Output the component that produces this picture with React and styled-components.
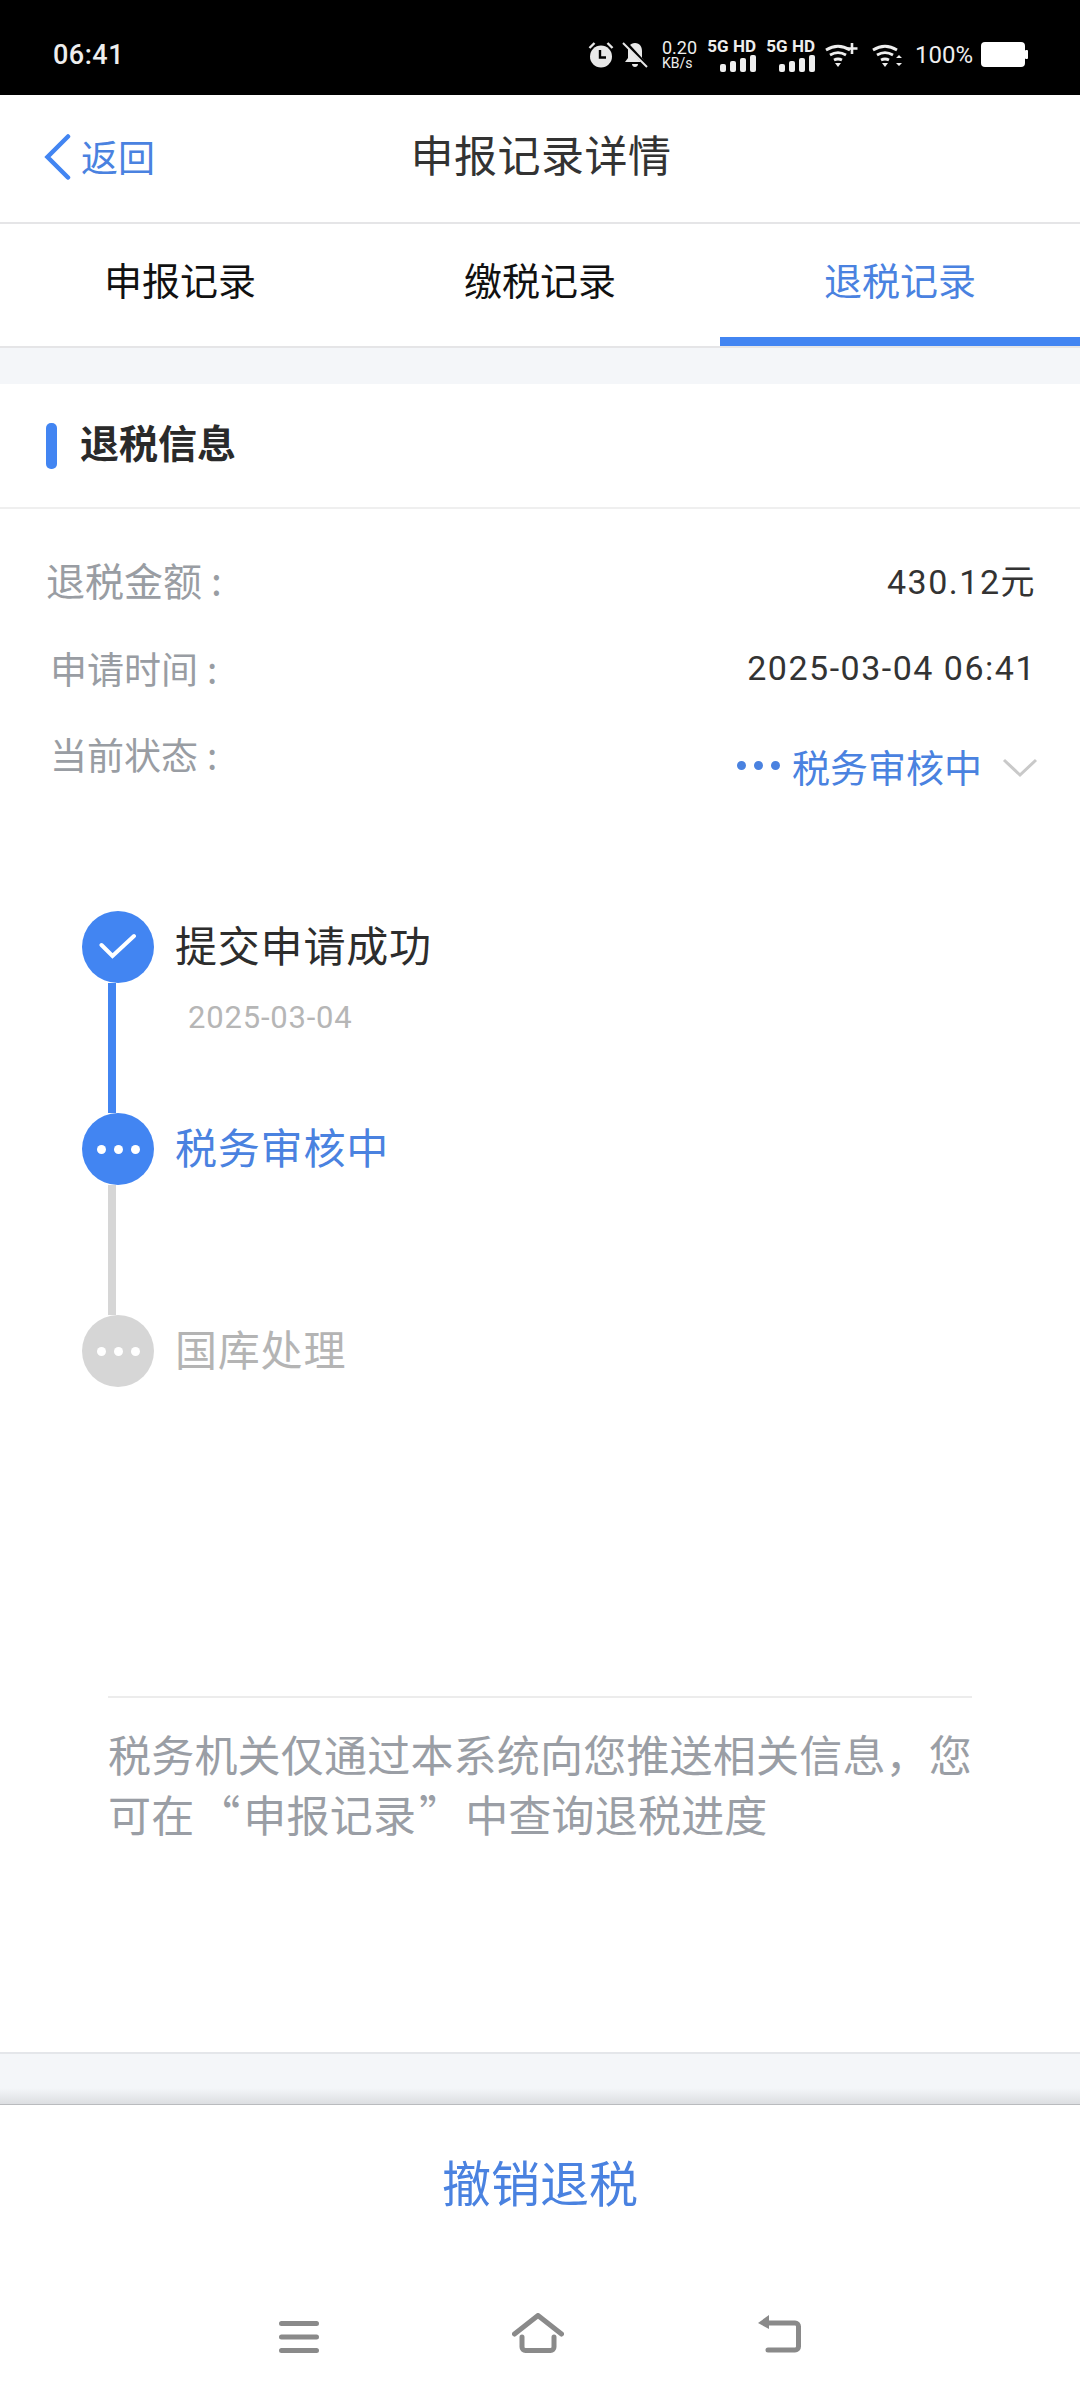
import React from "react";
import styled, { createGlobalStyle } from "styled-components";

const BLUE = "#4a82e0";
const FILL = "#4285f2";
const CJK = `"Noto Sans CJK SC", sans-serif`;
const LATIN = `Roboto, "Noto Sans CJK SC", sans-serif`;

const GlobalStyle = createGlobalStyle`
  html, body {
    margin: 0;
    padding: 0;
    background: #fff;
  }
  * {
    box-sizing: border-box;
  }
`;

const AlarmIcon = () => (
  <svg width="26" height="27" viewBox="0 0 26 27">
    <circle cx="13" cy="15.500" r="11" fill="#e8e8e8" />
    <path d="M12 9v7.500h6" fill="none" stroke="#000" strokeWidth="2.4" />
    <path d="M1.500 7l5-5M24.500 7l-5-5" stroke="#e8e8e8" strokeWidth="2.4" />
  </svg>
);

const BellOffIcon = () => (
  <svg width="26" height="26" viewBox="0 0 26 26">
    <path
      d="M13 1c5 0 7 4 7 8v7l3 4H3l3-4V9c0-4 2-8 7-8zM10 22h6c0 2-1.500 3-3 3s-3-1-3-3z"
      fill="#e8e8e8"
    />
    <path d="M3 0l22 24" stroke="#000" strokeWidth="3.500" />
    <path d="M1 1l24 24" stroke="#e8e8e8" strokeWidth="2" />
  </svg>
);

const SignalBars = () => (
  <svg width="36" height="17" viewBox="0 0 36 17">
    <rect x="0" y="9" width="6" height="8" rx="2" fill="#eee" />
    <rect x="10" y="6" width="6" height="11" rx="2" fill="#eee" />
    <rect x="20" y="3" width="6" height="14" rx="2" fill="#eee" />
    <rect x="30" y="0" width="6" height="17" rx="2" fill="#eee" />
  </svg>
);

const WifiIcon = ({ plus }) => (
  <svg width="33" height="25" viewBox="0 0 33 25">
    <path
      d="M1 8c8-5 16-5 24 0M5 13c5-3 11-3 16 0M9 18c3-1.500 5-1.500 8 0"
      fill="none"
      stroke="#eee"
      strokeWidth="2.800"
    />
    <path d="M10 21h6l-3 4z" fill="#eee" />
    {plus ? (
      <path d="M27 1v11M21.500 6.500h11" stroke="#eee" strokeWidth="2.600" />
    ) : (
      <path d="M27 13l3 3h-6zM27 24l3-3h-6z" fill="#eee" />
    )}
  </svg>
);

const BatteryIcon = () => (
  <svg width="47" height="25" viewBox="0 0 47 25">
    <rect x="0" y="0" width="44" height="25" rx="4" fill="#fff" />
    <rect x="44" y="8" width="3" height="9" rx="1" fill="#fff" />
  </svg>
);

const BackChevron = () => (
  <svg width="27" height="46" viewBox="0 0 27 46">
    <path
      d="M24 2.500L3.500 23 24 43.500"
      fill="none"
      stroke={FILL}
      strokeWidth="4.500"
      strokeLinecap="round"
    />
  </svg>
);

const DownChevron = () => (
  <svg width="36" height="20" viewBox="0 0 36 20">
    <path d="M2 2l16 15L34 2" fill="none" stroke="#c9c9c9" strokeWidth="3" />
  </svg>
);

const CheckMark = () => (
  <svg width="38" height="28" viewBox="0 0 38 28">
    <path
      d="M2.500 12l11 11L35 3"
      fill="none"
      stroke="#fff"
      strokeWidth="4"
      strokeLinecap="round"
    />
  </svg>
);

const MenuIcon = () => (
  <svg width="40" height="32" viewBox="0 0 40 32">
    <path
      d="M2.500 2.500h35M2.500 16h35M2.500 29.500h35"
      stroke="#8a8a8a"
      strokeWidth="5"
      strokeLinecap="round"
    />
  </svg>
);

const HomeIcon = () => (
  <svg width="52" height="40" viewBox="0 0 52 40">
    <path
      d="M2.500 21L26 2.500 49.500 21M10 24v10c0 2 1.500 3.500 3.500 3.500h25c2 0 3.500-1.500 3.500-3.500V24"
      fill="none"
      stroke="#8a8a8a"
      strokeWidth="5"
      strokeLinecap="round"
      strokeLinejoin="round"
    />
  </svg>
);

const ReturnIcon = () => (
  <svg width="44" height="38" viewBox="0 0 44 38">
    <path
      d="M8 8h30c2 0 3.500 1.500 3.500 3.500v20c0 2-1.500 3.500-3.500 3.500H11"
      fill="none"
      stroke="#8a8a8a"
      strokeWidth="5"
      strokeLinecap="round"
    />
    <path d="M12 0v14L1 8z" fill="#8a8a8a" />
  </svg>
);

const steps = [
  { state: "done", title: "提交申请成功", date: "2025-03-04" },
  { state: "active", title: "税务审核中" },
  { state: "todo", title: "国库处理" },
];

function App() {
  return (
    <Page>
      <GlobalStyle />
      <StatusBar>
        <Clock>06:41</Clock>
        <StatusIcons>
          <AlarmIcon />
          <BellOffIcon />
          <Speed>
            <span>0.20</span>
            <small>KB/s</small>
          </Speed>
          <Sim $gap={5}>
            <b>5G HD</b>
            <SignalBars />
          </Sim>
          <Sim $gap={3}>
            <b>5G HD</b>
            <SignalBars />
          </Sim>
          <WifiSlot $gap={2}>
            <WifiIcon plus />
          </WifiSlot>
          <WifiSlot $gap={6}>
            <WifiIcon />
          </WifiSlot>
          <Battery>100%</Battery>
          <BatteryIcon />
        </StatusIcons>
      </StatusBar>

      <NavBar>
        <BackBtn>
          <BackChevron />
          <span>返回</span>
        </BackBtn>
        <NavTitle>申报记录详情</NavTitle>
      </NavBar>

      <Tabs>
        <Tab>申报记录</Tab>
        <Tab>缴税记录</Tab>
        <Tab $active>退税记录</Tab>
      </Tabs>

      <Band />

      <Main>
        <SectionHead>
          <Mark />
          <SectionTitle>退税信息</SectionTitle>
        </SectionHead>

        <Info>
          <InfoRow>
            <Label>
              退税金额<Colon>:</Colon>
            </Label>
            <Value>430.12元</Value>
          </InfoRow>
          <InfoRow>
            <Label $indent>
              申请时间<Colon>:</Colon>
            </Label>
            <Value>2025-03-04 06:41</Value>
          </InfoRow>
          <StatusRow>
            <Label $indent>
              当前状态<Colon>:</Colon>
            </Label>
            <StatusValue>
              <Dots $size={9} $color={BLUE} />
              <span>税务审核中</span>
              <DownChevron />
            </StatusValue>
          </StatusRow>
        </Info>

        <Timeline>
          {steps.map((step, i) => (
            <Step key={step.title}>
              <Rail>
                <Node $state={step.state}>
                  {step.state === "done" ? (
                    <CheckMark />
                  ) : (
                    <Dots $size={9} $color="#fff" />
                  )}
                </Node>
                {i < steps.length - 1 && <Line $state={step.state} />}
              </Rail>
              <StepBody>
                <StepTitle $state={step.state}>{step.title}</StepTitle>
                {step.date && <StepDate>{step.date}</StepDate>}
              </StepBody>
            </Step>
          ))}
        </Timeline>

        <Note>
          <NoteText>
            {"税务机关仅通过本系统向您推送相关信息，您可在\u200a“\u200a申报记录\u200a”\u200a中查询退税进度"}
          </NoteText>
        </Note>
      </Main>

      <BottomBand />

      <Footer>
        <Cancel>撤销退税</Cancel>
        <SystemNav>
          <MenuIcon />
          <HomeIcon />
          <ReturnIcon />
        </SystemNav>
      </Footer>
    </Page>
  );
}

const Page = styled.div`
  display: flex;
  flex-direction: column;
  width: 1080px;
  height: 2400px;
  overflow: hidden;
  background: #fff;
  font-family: ${CJK};
`;

// 상단 상태바
const StatusBar = styled.div`
  display: flex;
  align-items: center;
  justify-content: space-between;
  flex: none;
  height: 95px;
  padding: 14px 52px 0 53px;
  background: #000;
  color: #eee;
  font-family: ${LATIN};
`;

const Clock = styled.div`
  font-size: 27px;
  font-weight: 500;
  letter-spacing: 0.5px;
`;

const StatusIcons = styled.div`
  display: flex;
  align-items: center;
  gap: 8px;
`;

const Speed = styled.div`
  display: flex;
  flex-direction: column;
  width: 33px;
  margin-left: 6px;
  font-size: 18px;
  line-height: 17px;
  small {
    font-size: 14px;
    line-height: 15px;
  }
`;

const Sim = styled.div`
  display: flex;
  flex-direction: column;
  align-items: flex-end;
  width: 48px;
  margin-left: ${(p) => p.$gap}px;
  b {
    font-size: 17px;
    line-height: 17px;
    white-space: nowrap;
  }
`;

const WifiSlot = styled.div`
  display: flex;
  margin-left: ${(p) => p.$gap}px;
`;

const Battery = styled.div`
  margin-left: 2px;
  font-size: 24px;
`;

const NavBar = styled.div`
  display: flex;
  align-items: center;
  justify-content: center;
  position: relative;
  flex: none;
  height: 129px;
  border-bottom: 2px solid #e5e5e7;
`;

const BackBtn = styled.div`
  position: absolute;
  left: 44px;
  top: 38px;
  display: flex;
  align-items: center;
  gap: 10px;
  color: ${BLUE};
  font-size: 37px;
  line-height: 46px;
  span {
    padding-bottom: 2px;
  }
`;

const NavTitle = styled.div`
  padding: 0 0 12px 2px;
  color: #333;
  font-size: 43px;
  letter-spacing: 0.5px;
`;

const Tabs = styled.div`
  display: grid;
  grid-template-columns: 360px 360px 360px;
  flex: none;
  height: 124px;
  border-bottom: 2px solid #e5e5e7;
`;

const Tab = styled.div`
  display: flex;
  align-items: center;
  justify-content: center;
  padding-bottom: 5px;
  color: ${(p) => (p.$active ? BLUE : "#111")};
  font-size: 38px;
  border-bottom: 9px solid ${(p) => (p.$active ? FILL : "transparent")};
`;

const Band = styled.div`
  flex: none;
  height: 36px;
  background: #f4f6f9;
`;

const Main = styled.div`
  flex: 1;
  min-height: 0;
`;

const SectionHead = styled.div`
  display: flex;
  align-items: center;
  gap: 23px;
  height: 125px;
  padding-left: 46px;
  border-bottom: 2px solid #efefef;
`;

const Mark = styled.div`
  width: 11px;
  height: 46px;
  border-radius: 5px;
  background: ${FILL};
`;

const SectionTitle = styled.div`
  padding-bottom: 9px;
  color: #2a2a2a;
  font-size: 39px;
  font-weight: 700;
`;

const Info = styled.div`
  display: flex;
  flex-direction: column;
  padding: 42px 44px 0 46px;
`;

const InfoRow = styled.div`
  display: flex;
  align-items: center;
  justify-content: space-between;
  height: 56px;
  margin-bottom: 33px;
`;

const StatusRow = styled(InfoRow)`
  align-items: flex-start;
`;

const Label = styled.div`
  display: flex;
  padding-left: ${(p) => (p.$indent ? 4 : 0)}px;
  color: #999da3;
  font-size: ${(p) => (p.$indent ? 37 : 39)}px;
  line-height: 50px;
`;

const Colon = styled.span`
  margin-left: 9px;
`;

const Value = styled.div`
  color: #333;
  font-family: ${LATIN};
  font-size: 34px;
  letter-spacing: 1.5px;
`;

const StatusValue = styled.div`
  display: flex;
  align-items: center;
  height: 56px;
  margin-top: 8px;
  margin-right: -2px;
  color: ${BLUE};
  font-size: 38px;
  span {
    margin: 0 20px 0 12px;
  }
  svg {
    margin-top: 6px;
  }
`;

// 점 세 개
const Dots = ({ $size, $color }) => (
  <DotRow>
    <Dot $size={$size} $color={$color} />
    <Dot $size={$size} $color={$color} />
    <Dot $size={$size} $color={$color} />
  </DotRow>
);

const DotRow = styled.div`
  display: flex;
  gap: 8px;
`;

const Dot = styled.i`
  display: block;
  width: ${(p) => p.$size}px;
  height: ${(p) => p.$size}px;
  border-radius: 50%;
  background: ${(p) => p.$color};
`;

// 진행 단계
const Timeline = styled.div`
  display: flex;
  flex-direction: column;
  padding: 93px 0 0 82px;
`;

const Step = styled.div`
  display: flex;
  gap: 21px;
`;

const Rail = styled.div`
  display: flex;
  flex-direction: column;
  width: 72px;
`;

const Node = styled.div`
  display: flex;
  align-items: center;
  justify-content: center;
  width: 72px;
  height: 72px;
  border-radius: 50%;
  background: ${(p) => (p.$state === "todo" ? "#d6d6d6" : FILL)};
`;

const Line = styled.div`
  width: 8px;
  height: 130px;
  margin-left: 26px;
  background: ${(p) => (p.$state === "done" ? FILL : "#d6d6d6")};
`;

const StepBody = styled.div`
  display: flex;
  flex-direction: column;
`;

const StepTitle = styled.div`
  color: ${(p) =>
    p.$state === "done" ? "#2d2d2d" : p.$state === "active" ? BLUE : "#b4b4b4"};
  font-size: 42px;
  line-height: 66px;
  letter-spacing: 0.8px;
`;

const StepDate = styled.div`
  margin: 22px 0 0 13px;
  color: #b6b6b6;
  font-family: ${LATIN};
  font-size: 31px;
  line-height: 38px;
  letter-spacing: 0.8px;
`;

const Note = styled.div`
  margin: 309px 108px 0 108px;
  padding-top: 25px;
  border-top: 2px solid #ececec;
`;

const NoteText = styled.div`
  color: #9a9ea5;
  font-size: 43px;
  line-height: 60px;
  letter-spacing: 0.2px;
`;

const BottomBand = styled.div`
  flex: none;
  height: 53px;
  border-top: 2px solid #e4e6ea;
  border-bottom: 1px solid #b9bbbe;
  background: linear-gradient(
    to bottom,
    #f4f6f9 0%,
    #f4f6f9 68%,
    #dcdee1 100%
  );
`;

const Footer = styled.div`
  display: flex;
  flex-direction: column;
  align-items: center;
  flex: none;
  height: 295px;
`;

const Cancel = styled.div`
  margin-top: 40px;
  color: ${BLUE};
  font-size: 49px;
  line-height: 72px;
`;

const SystemNav = styled.div`
  display: flex;
  align-items: flex-end;
  justify-content: space-between;
  width: 522px;
  margin-top: 96px;
`;

export default App;
